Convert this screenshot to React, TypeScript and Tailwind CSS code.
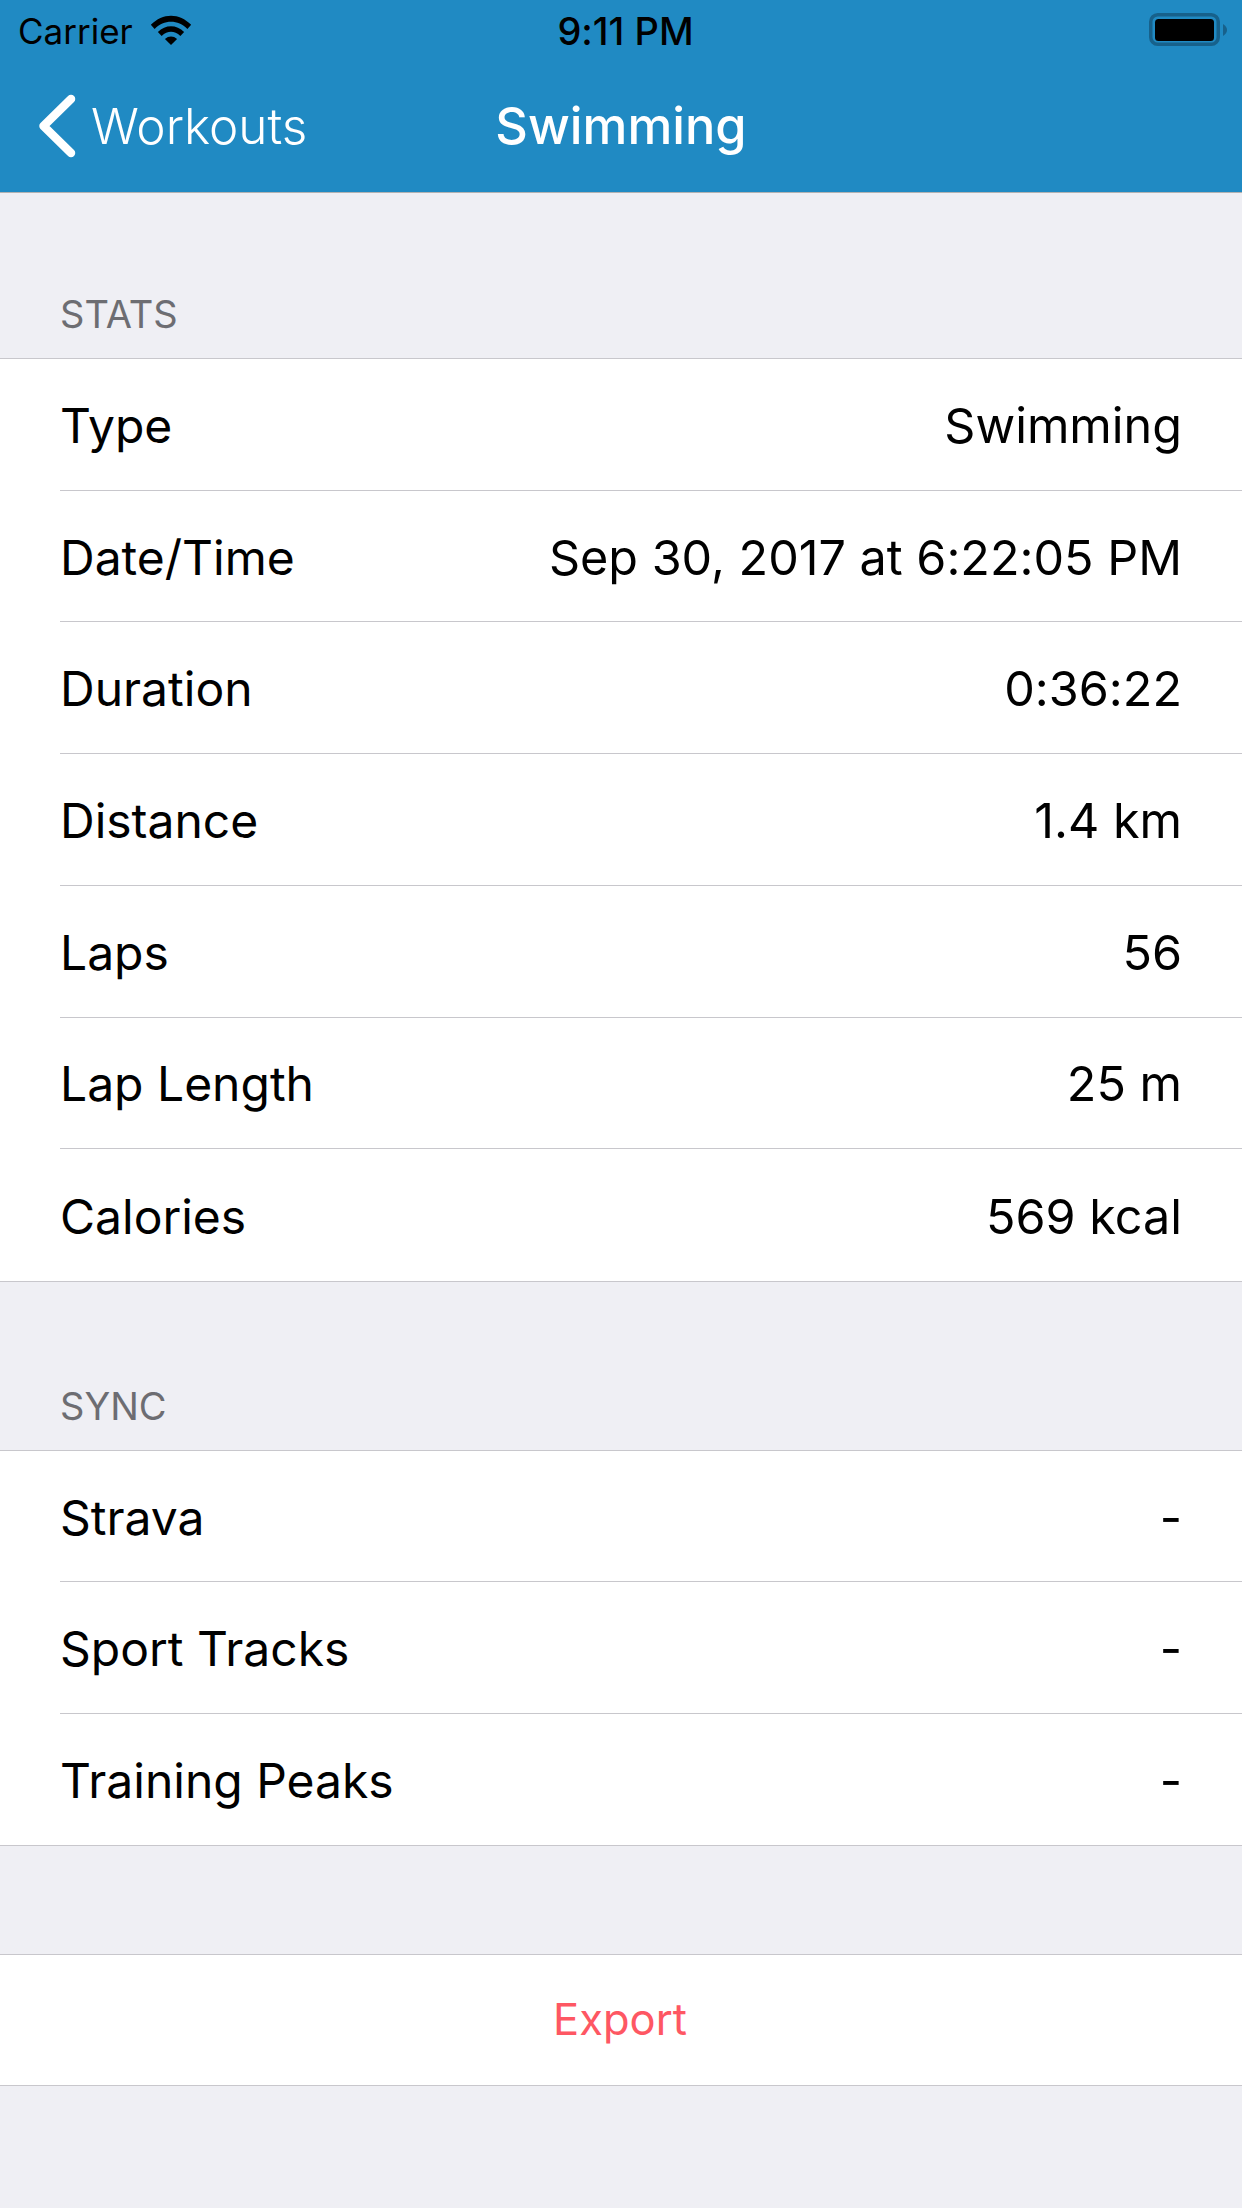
function Row({ label, value, last }: { label: string; value: string; last?: boolean }) {
  return (
    <div className="flex min-h-0 flex-1 pl-[60px]">
      <div className={`flex flex-1 items-center justify-between pr-[60px] pt-[3px] ${last ? "" : "border-b border-[#c8c7cc]"}`}>
        <span className="text-[48px]">{label}</span>
        <span>{value}</span>
      </div>
    </div>
  );
}

function Section({ title, rows, top, body }: { title: string; rows: [string, string][]; top: string; body: string }) {
  return (
    <section>
      <div className={`flex items-end pb-[22px] pl-[60px] text-[38px] leading-[44px] text-[#6d6d72] ${top}`}>{title}</div>
      <div className={`flex flex-col border-y border-[#c8c7cc] bg-white text-[48.5px] leading-[58px] text-black ${body}`}>
        {rows.map(([l, v], i) => (
          <Row key={l} label={l} value={v} last={i === rows.length - 1} />
        ))}
      </div>
    </section>
  );
}

export default function App() {
  return (
    <div className="flex h-[2208px] w-[1242px] flex-col overflow-hidden bg-[#efeff4] font-['Inter','Liberation_Sans',sans-serif] [font-feature-settings:'calt'_0]">
      <header className="h-[193px] shrink-0 border-b border-[#b2b2b2] bg-[#208ac3]">
        <div className="grid h-[60px] grid-cols-[1fr_auto_1fr] items-center pl-[18px] pr-[15px] pt-[2px] text-[35px] leading-[44px] text-black">
          <div className="flex items-center gap-[17px]">
            <span>Carrier</span>
            <svg width="42" height="30" viewBox="0 0 44 32" className="mb-[2px]">
              <path d="M0.5 10.5 C13 -2.5 31 -2.5 43.5 10.5 L39.5 14.8 C29.5 4.5 14.5 4.5 4.5 14.8 Z" fill="#000" />
              <path d="M8 18 C16 10 28 10 36 18 L32 22.3 C25.5 16.5 18.5 16.5 12 22.3 Z" fill="#000" />
              <path d="M15.5 25.5 C19.5 22 24.5 22 28.5 25.5 L22 32 Z" fill="#000" />
            </svg>
          </div>
          <span className="ml-[6px] text-[38px] font-medium">9:11 PM</span>
          <svg width="78" height="36" viewBox="0 0 78 36" className="justify-self-end">
            <rect x="1.75" y="1.75" width="67.5" height="29.5" rx="7" fill="none" stroke="#17618b" strokeWidth="3.5" />
            <rect x="6" y="6" width="59" height="22" rx="3.5" fill="#000" />
            <path d="M74 11 C77 13 78 15 78 17 C78 19 77 21 74 23 Z" fill="#17618b" />
          </svg>
        </div>
        <div className="grid h-[132px] grid-cols-[1fr_auto_1fr] items-center pl-[38px] text-white">
          <div className="flex items-center gap-[15px]">
            <svg width="38" height="64" viewBox="0 0 38 64">
              <path d="M33 5 L5.5 32 L33 59" fill="none" stroke="#fff" strokeWidth="8.5" strokeLinecap="round" strokeLinejoin="round" />
            </svg>
            <span className="text-[49.5px] font-light leading-[58px]">Workouts</span>
          </div>
          <span className="mr-[38px] text-[50.5px] font-medium leading-[58px]">Swimming</span>
          <div />
        </div>
      </header>
      <Section
        title="STATS"
        top="h-[165px]"
        body="h-[924px]"
        rows={[
          ["Type", "Swimming"],
          ["Date/Time", "Sep 30, 2017 at 6:22:05 PM"],
          ["Duration", "0:36:22"],
          ["Distance", "1.4 km"],
          ["Laps", "56"],
          ["Lap Length", "25 m"],
          ["Calories", "569 kcal"],
        ]}
      />
      <Section
        title="SYNC"
        top="h-[168px]"
        body="h-[396px]"
        rows={[
          ["Strava", "-"],
          ["Sport Tracks", "-"],
          ["Training Peaks", "-"],
        ]}
      />
      <div className="mt-[108px] flex h-[132px] items-center justify-center border-y border-[#c8c7cc] bg-white pr-[2px] text-[43.5px] text-[#fe5763]">
        Export
      </div>
    </div>
  );
}
